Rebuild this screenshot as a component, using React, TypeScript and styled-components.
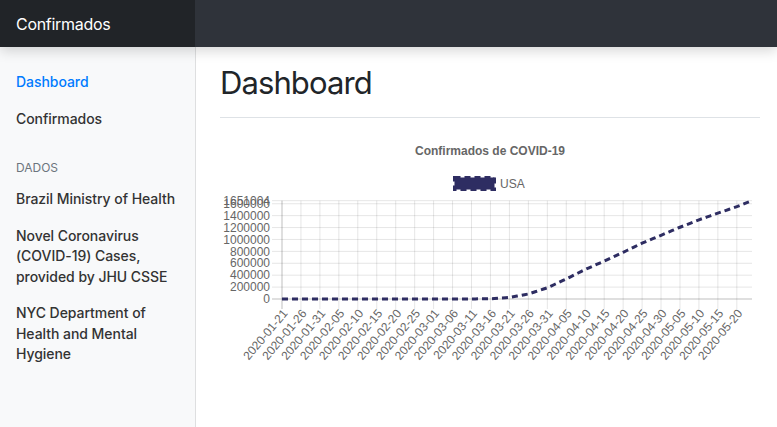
import React from "react";
import styled, { createGlobalStyle } from "styled-components";

const Global = createGlobalStyle`
  html, body { margin: 0; padding: 0; }
  body {
    font-family: Inter, "Noto Sans", "Liberation Sans", sans-serif;
    color: #212529;
    background: #fff;
  }
  #root { min-height: 100vh; }
`;

const Page = styled.div`
  min-height: 100vh;
  display: flex;
  flex-direction: column;
`;

const Navbar = styled.header`
  height: 47px;
  display: flex;
  background: #2f333a;
  position: relative;
  z-index: 2;
  box-shadow: 0 4px 12px rgba(0, 0, 0, 0.16);
`;

const Brand = styled.div`
  width: 195px;
  background: #212428;
  color: #fff;
  font-size: 16px;
  letter-spacing: -0.3px;
  font-weight: 400;
  display: flex;
  align-items: center;
  padding-left: 16px;
  box-sizing: border-box;
`;

const Body = styled.div`
  flex: 1;
  display: flex;
`;

const Sidebar = styled.nav`
  width: 196px;
  flex: none;
  background: #f8f9fa;
  box-shadow: inset -1px 0 0 rgba(0, 0, 0, 0.1);
  padding-top: 17px;
  box-sizing: border-box;
`;

const NavLink = styled.a<{ $active?: boolean }>`
  display: block;
  padding: 8px 16px;
  font-size: 14px;
  line-height: 20.5px;
  font-weight: 500;
  letter-spacing: -0.05px;
  color: ${(p) => (p.$active ? "#007bff" : "#333")};
  text-decoration: none;
`;

const Heading = styled.h6`
  margin: 22px 0 4px;
  padding: 0 16px;
  font-size: 12px;
  line-height: 18px;
  font-weight: 400;
  text-transform: uppercase;
  color: #6c757d;
`;

const Main = styled.main`
  flex: 1;
  padding: 0 17px 0 24px;
  min-width: 0;
`;

const TitleBar = styled.div`
  padding: 17px 0 8px;
  margin-bottom: 16px;
  border-bottom: 1px solid #dee2e6;
`;

const H1 = styled.h1`
  margin: 0 0 7px;
  font-size: 31px;
  line-height: 38.4px;
  letter-spacing: -0.9px;
  font-weight: 400;
  color: #212529;
`;

const ChartSvg = styled.svg`
  display: block;
  font-family: "Liberation Sans", Arial, sans-serif;
`;

// ---- chart data ----
const keys: [number, number][] = [
  [0, 1], [10, 5], [20, 13], [30, 15], [40, 75], [45, 320], [50, 1300],
  [55, 4600], [60, 25500], [65, 83800], [70, 188000], [75, 337000],
  [80, 496000], [85, 636000], [90, 784000], [95, 938000], [100, 1070000],
  [105, 1205000], [110, 1330000], [115, 1442000], [120, 1551000], [124, 1651004],
];

function valueAt(d: number): number {
  for (let i = 0; i < keys.length - 1; i++) {
    const [d0, v0] = keys[i];
    const [d1, v1] = keys[i + 1];
    if (d >= d0 && d <= d1) return v0 + ((v1 - v0) * (d - d0)) / (d1 - d0);
  }
  return keys[keys.length - 1][1];
}

const N = 125;
const MAX = 1651004;
const X0 = 62;
const X1 = 532;
const YT = 66.7;
const YZ = 165;
const px = (d: number) => X0 + (d * (X1 - X0)) / (N - 1);
const py = (v: number) => YZ - (v / MAX) * (YZ - YT);

function dateLabel(d: number): string {
  const t = new Date(Date.UTC(2020, 0, 21 + d));
  const m = String(t.getUTCMonth() + 1).padStart(2, "0");
  const dd = String(t.getUTCDate()).padStart(2, "0");
  return `2020-${m}-${dd}`;
}

const NAVY = "#2e2d62";
const GRID = "rgba(0,0,0,0.1)";
const ZERO = "rgba(0,0,0,0.25)";

function Chart() {
  const pts = Array.from({ length: N }, (_, d) => `${px(d).toFixed(2)},${py(valueAt(d)).toFixed(2)}`).join(" ");
  const yTicks = [0, 200000, 400000, 600000, 800000, 1000000, 1200000, 1400000, 1600000];
  const xTicks = Array.from({ length: 25 }, (_, i) => i * 5);
  return (
    <ChartSvg width={540} height={236} viewBox="0 0 540 236">
      <text x={270} y={21} textAnchor="middle" fontSize={12} fontWeight="bold" fill="#666">
        Confirmados de COVID-19
      </text>
      <rect x={234.5} y={43.5} width={40} height={12} fill={NAVY} stroke={NAVY} strokeWidth={3} strokeDasharray="6 4" />
      <text x={280} y={54} fontSize={12} fill="#666">USA</text>

      {yTicks.map((v) => (
        <line key={v} x1={52} x2={X1} y1={py(v)} y2={py(v)} stroke={v === 0 ? ZERO : GRID} strokeWidth={1} />
      ))}
      <line x1={52} x2={X1} y1={YT} y2={YT} stroke={GRID} strokeWidth={1} />
      {xTicks.map((d) => (
        <line key={d} x1={px(d)} x2={px(d)} y1={YT} y2={YZ + 10} stroke={d === 0 ? ZERO : GRID} strokeWidth={1} />
      ))}

      {yTicks.map((v) => (
        <text key={v} x={50} y={py(v)} dy="0.35em" textAnchor="end" fontSize={12} fill="#666">
          {v}
        </text>
      ))}
      <text x={50} y={YT} dy="0.35em" textAnchor="end" fontSize={12} fill="#666">1651004</text>

      {xTicks.map((d) => (
        <text
          key={d}
          transform={`translate(${px(d) + 3},${YZ + 12}) rotate(-50)`}
          dy="0.35em"
          textAnchor="end"
          fontSize={12}
          fill="#666"
        >
          {dateLabel(d)}
        </text>
      ))}

      <polyline points={pts} fill="none" stroke={NAVY} strokeWidth={3} strokeDasharray="6 4" />
    </ChartSvg>
  );
}

export default function App() {
  return (
    <Page>
      <Global />
      <Navbar>
        <Brand>Confirmados</Brand>
      </Navbar>
      <Body>
        <Sidebar>
          <NavLink href="#" $active>Dashboard</NavLink>
          <NavLink href="#">Confirmados</NavLink>
          <Heading>Dados</Heading>
          <NavLink href="#">Brazil Ministry of Health</NavLink>
          <NavLink href="#">Novel Coronavirus (COVID-19) Cases, provided by JHU CSSE</NavLink>
          <NavLink href="#">NYC Department of Health and Mental Hygiene</NavLink>
        </Sidebar>
        <Main>
          <TitleBar>
            <H1>Dashboard</H1>
          </TitleBar>
          <Chart />
        </Main>
      </Body>
    </Page>
  );
}
